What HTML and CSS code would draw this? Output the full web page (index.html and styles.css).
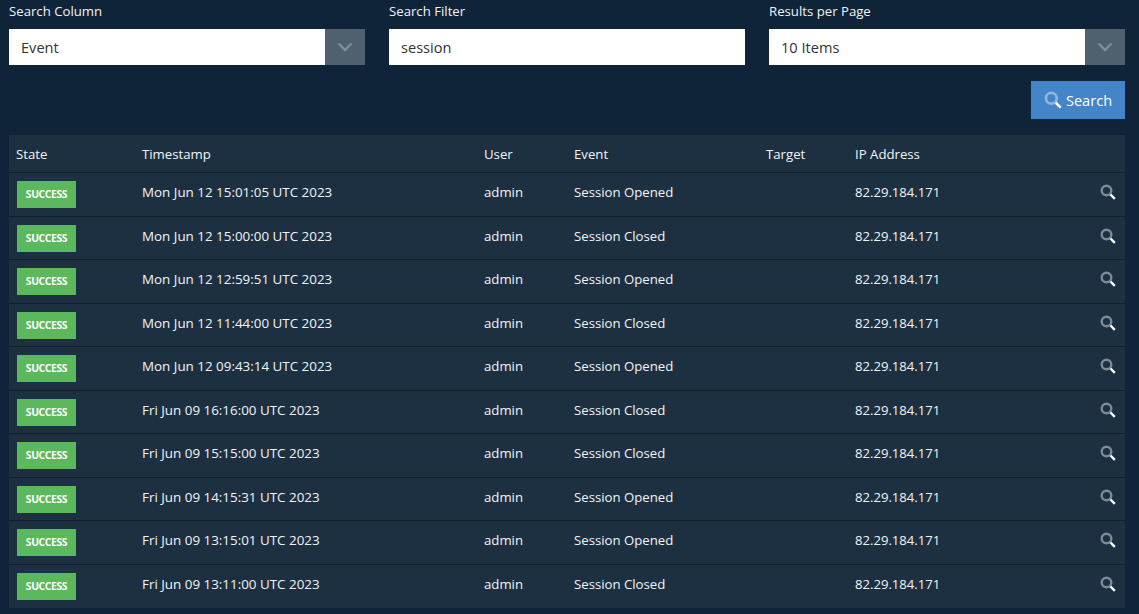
FILE: index.html
```html
<!DOCTYPE html>
<html lang="en">
<head>
<meta charset="utf-8">
<title>Audit Log</title>
<link rel="stylesheet" href="styles.css">
</head>
<body>
<svg class="defs" width="0" height="0" aria-hidden="true">
  <symbol id="mag" viewBox="0 0 16 16">
    <circle cx="6.5" cy="6.5" r="4.8" fill="none" stroke="#7d8a97" stroke-width="2.4"/>
    <path d="M10.5 10.5 L14.8 14.8" stroke="#ffffff" stroke-width="2.4" stroke-linecap="butt"/>
  </symbol>
  <symbol id="mag-btn" viewBox="0 0 16 16">
    <circle cx="6.5" cy="6.5" r="4.8" fill="none" stroke="#8fb5dc" stroke-width="2.4"/>
    <path d="M10.5 10.5 L14.8 14.8" stroke="#ffffff" stroke-width="2.4" stroke-linecap="butt"/>
  </symbol>
</svg>
<main class="page">
  <section class="filters">
    <div class="field">
      <label class="field-label">Search Column</label>
      <div class="control">
        <span class="control-value">Event</span>
        <span class="control-arrow"><svg width="16" height="10" viewBox="0 0 16 10"><path d="M1.5 1.5 L8 8 L14.5 1.5" fill="none" stroke="#7f8b98" stroke-width="2.4"/></svg></span>
      </div>
    </div>
    <div class="field">
      <label class="field-label">Search Filter</label>
      <div class="control">
        <span class="control-value">session</span>
      </div>
    </div>
    <div class="field">
      <label class="field-label">Results per Page</label>
      <div class="control">
        <span class="control-value">10 Items</span>
        <span class="control-arrow"><svg width="16" height="10" viewBox="0 0 16 10"><path d="M1.5 1.5 L8 8 L14.5 1.5" fill="none" stroke="#7f8b98" stroke-width="2.4"/></svg></span>
      </div>
    </div>
  </section>
  <div class="actions">
    <button class="search-btn" type="button"><svg class="btn-icon" width="18" height="18"><use href="#mag-btn"/></svg>Search</button>
  </div>
  <table class="log">
    <colgroup>
      <col class="c-state"><col class="c-time"><col class="c-user"><col class="c-event"><col class="c-target"><col class="c-ip"><col class="c-act">
    </colgroup>
    <thead>
      <tr><th>State</th><th>Timestamp</th><th>User</th><th>Event</th><th>Target</th><th>IP Address</th><th></th></tr>
    </thead>
    <tbody>
      <tr><td class="state"><span class="badge">SUCCESS</span></td><td class="time">Mon Jun 12 15:01:05 UTC 2023</td><td>admin</td><td>Session Opened</td><td></td><td class="ip">82.29.184.171</td><td class="act"><svg width="16" height="16"><use href="#mag"/></svg></td></tr>
      <tr><td class="state"><span class="badge">SUCCESS</span></td><td class="time">Mon Jun 12 15:00:00 UTC 2023</td><td>admin</td><td>Session Closed</td><td></td><td class="ip">82.29.184.171</td><td class="act"><svg width="16" height="16"><use href="#mag"/></svg></td></tr>
      <tr><td class="state"><span class="badge">SUCCESS</span></td><td class="time">Mon Jun 12 12:59:51 UTC 2023</td><td>admin</td><td>Session Opened</td><td></td><td class="ip">82.29.184.171</td><td class="act"><svg width="16" height="16"><use href="#mag"/></svg></td></tr>
      <tr><td class="state"><span class="badge">SUCCESS</span></td><td class="time">Mon Jun 12 11:44:00 UTC 2023</td><td>admin</td><td>Session Closed</td><td></td><td class="ip">82.29.184.171</td><td class="act"><svg width="16" height="16"><use href="#mag"/></svg></td></tr>
      <tr><td class="state"><span class="badge">SUCCESS</span></td><td class="time">Mon Jun 12 09:43:14 UTC 2023</td><td>admin</td><td>Session Opened</td><td></td><td class="ip">82.29.184.171</td><td class="act"><svg width="16" height="16"><use href="#mag"/></svg></td></tr>
      <tr><td class="state"><span class="badge">SUCCESS</span></td><td class="time">Fri Jun 09 16:16:00 UTC 2023</td><td>admin</td><td>Session Closed</td><td></td><td class="ip">82.29.184.171</td><td class="act"><svg width="16" height="16"><use href="#mag"/></svg></td></tr>
      <tr><td class="state"><span class="badge">SUCCESS</span></td><td class="time">Fri Jun 09 15:15:00 UTC 2023</td><td>admin</td><td>Session Closed</td><td></td><td class="ip">82.29.184.171</td><td class="act"><svg width="16" height="16"><use href="#mag"/></svg></td></tr>
      <tr><td class="state"><span class="badge">SUCCESS</span></td><td class="time">Fri Jun 09 14:15:31 UTC 2023</td><td>admin</td><td>Session Opened</td><td></td><td class="ip">82.29.184.171</td><td class="act"><svg width="16" height="16"><use href="#mag"/></svg></td></tr>
      <tr><td class="state"><span class="badge">SUCCESS</span></td><td class="time">Fri Jun 09 13:15:01 UTC 2023</td><td>admin</td><td>Session Opened</td><td></td><td class="ip">82.29.184.171</td><td class="act"><svg width="16" height="16"><use href="#mag"/></svg></td></tr>
      <tr><td class="state"><span class="badge">SUCCESS</span></td><td class="time">Fri Jun 09 13:11:00 UTC 2023</td><td>admin</td><td>Session Closed</td><td></td><td class="ip">82.29.184.171</td><td class="act"><svg width="16" height="16"><use href="#mag"/></svg></td></tr>
    </tbody>
  </table>
</main>
</body>
</html>
```
FILE: styles.css
```css
* { box-sizing: border-box; }
html, body { margin: 0; height: 100%; overflow: hidden; }
body {
  background: #0f2339;
  color: #f2f4f6;
  font-family: "Open Sans", "Noto Sans", sans-serif;
  font-size: 13px;
}
.defs { position: absolute; }
.page { padding: 0 14px 0 9px; }
.filters {
  display: grid;
  grid-template-columns: repeat(3, 356px);
  column-gap: 24px;
}
.field-label {
  display: block;
  height: 29px;
  line-height: 23px;
  font-size: 13.2px;
}
.control {
  display: flex;
  align-items: center;
  height: 36px;
  background: #fff;
  color: #333;
  font-size: 14.6px;
}
.control-value { flex: 1; padding-left: 12px; }
.control-arrow {
  width: 40px;
  height: 100%;
  background: #51606f;
  display: flex;
  align-items: center;
  justify-content: center;
}
.control-arrow svg { display: block; }
.actions {
  display: flex;
  justify-content: flex-end;
  margin-top: 16px;
}
.search-btn {
  display: flex;
  align-items: center;
  justify-content: center;
  gap: 4px;
  width: 94px;
  height: 38px;
  border: 0;
  background: #4385c8;
  color: #fff;
  font: inherit;
  font-size: 14.6px;
  padding: 0;
}
.log {
  width: 1116px;
  margin-top: 16px;
  border-collapse: collapse;
  table-layout: fixed;
  background: #1d3041;
}
.c-state { width: 125px; }
.c-time { width: 342px; }
.c-user { width: 90px; }
.c-event { width: 192px; }
.c-target { width: 89px; }
.c-ip { width: 200px; }
.log th, .log td {
  text-align: left;
  font-weight: 400;
  padding: 0 0 0 8px;
  white-space: nowrap;
  font-size: 13.2px;
}
.log th { height: 37.5px; padding-top: 1px; }
.log td { height: 43.5px; padding-bottom: 4.5px; }
.log tr { border-bottom: 1px solid #111f2e; }
.log tbody tr:last-child { border-bottom: 0; }
.log th:first-child { padding-left: 7px; }
.log td.time { font-size: 13.4px; }
.log td.ip { font-size: 13.1px; }
.log td.state { padding: 0.5px 0 0 8px; }
.badge {
  display: block;
  width: 59px;
  height: 27px;
  background: #5cb85c;
  color: #fff;
  font-size: 10.4px;
  font-weight: 700;
  line-height: 27px;
  text-align: center;
  letter-spacing: -0.4px;
}
.log td.act { text-align: right; padding: 0 9px 6.5px 0; }
.act svg { display: inline-block; vertical-align: middle; }
.btn-icon { display: block; }
```
